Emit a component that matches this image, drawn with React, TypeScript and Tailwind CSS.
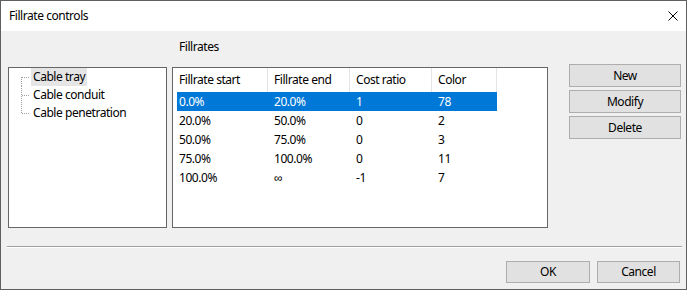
// Rows of the fillrate table
const rows = [
  { start: '0.0%', end: '20.0%', cost: '1', color: '78' },
  { start: '20.0%', end: '50.0%', cost: '0', color: '2' },
  { start: '50.0%', end: '75.0%', cost: '0', color: '3' },
  { start: '75.0%', end: '100.0%', cost: '0', color: '11' },
  { start: '100.0%', end: '∞', cost: '-1', color: '7' },
];

const treeItems = ['Cable tray', 'Cable conduit', 'Cable penetration'];

function TreeConnector({ first, last }: { first: boolean; last: boolean }) {
  return (
    <svg width="22" height="18" className="shrink-0" shapeRendering="crispEdges">
      <line
        x1="12.5"
        y1={first ? 9 : 0}
        x2="12.5"
        y2={last ? 10 : 18}
        stroke="#a0a0a0"
        strokeDasharray="1 1"
      />
      <line x1="13" y1="9.5" x2="21" y2="9.5" stroke="#a0a0a0" strokeDasharray="1 1" />
    </svg>
  );
}

function WinButton({ label, className }: { label: string; className: string }) {
  return (
    <button
      className={`flex items-center justify-center border border-[#adadad] bg-[#e1e1e1] text-black ${className}`}
    >
      {label}
    </button>
  );
}

export default function App() {
  return (
    <div
      className="w-[687px] h-[290px] border border-[#5f5f5f] bg-[#f0f0f0] flex flex-col text-[12px] leading-[16px] tracking-[-0.45px] text-black"
      style={{ fontFamily: '"Noto Sans", "Liberation Sans", sans-serif' }}
    >
      {/* Title bar */}
      <div className="h-[30px] bg-white flex items-center justify-between pl-[8px] pr-[8px] shrink-0">
        <span>Fillrate controls</span>
        <svg width="10" height="10" viewBox="0 0 10 10" className="shrink-0">
          <path d="M0.5 0.5 L9.5 9.5 M9.5 0.5 L0.5 9.5" stroke="#000" strokeWidth="1" />
        </svg>
      </div>

      {/* Main content */}
      <div className="flex items-start pl-[7px]">
        {/* Tree */}
        <div className="mt-[36px] w-[159px] h-[161px] border border-[#666666] bg-white">
          {treeItems.map((item, i) => (
            <div key={item} className="flex items-center h-[18px]">
              <TreeConnector first={i === 0} last={i === treeItems.length - 1} />
              <span className={`h-[18px] flex items-center px-[2px] ${i === 0 ? 'bg-[#e5e5e5]' : ''}`}>
                {item}
              </span>
            </div>
          ))}
        </div>

        {/* Fillrates table */}
        <div className="ml-[5px] flex flex-col">
          <div className="mt-[8px] h-[16px] pl-[7px]">Fillrates</div>
          <div className="mt-[12px] w-[376px] h-[161px] border border-[#666666] bg-white">
            <div className="flex h-[24px]">
              <div className="w-[95px] border-r border-[#e5e5e5] pl-[6px] flex items-center">Fillrate start</div>
              <div className="w-[82px] border-r border-[#e5e5e5] pl-[6px] flex items-center">Fillrate end</div>
              <div className="w-[82px] border-r border-[#e5e5e5] pl-[6px] flex items-center">Cost ratio</div>
              <div className="w-[65px] border-r border-[#e5e5e5] pl-[6px] flex items-center">Color</div>
            </div>
            {rows.map((r, i) => (
              <div
                key={r.start}
                className={`flex h-[19px] ml-[4px] w-[320px] items-center ${i === 0 ? 'bg-[#0078d7] text-white' : ''}`}
              >
                <div className="w-[91px] pl-[2px]">{r.start}</div>
                <div className="w-[82px] pl-[6px]">{r.end}</div>
                <div className="w-[82px] pl-[6px]">{r.cost}</div>
                <div className="w-[65px] pl-[6px]">{r.color}</div>
              </div>
            ))}
          </div>
        </div>

        {/* Side buttons */}
        <div className="ml-[21px] mt-[33px] flex flex-col gap-[3px]">
          <WinButton label="New" className="w-[112px] h-[23px]" />
          <WinButton label="Modify" className="w-[112px] h-[23px]" />
          <WinButton label="Delete" className="w-[112px] h-[23px]" />
        </div>
      </div>

      {/* Separator */}
      <div className="ml-[6px] mt-[18px] w-[675px] border-t border-[#a0a0a0] border-b border-b-white" />

      {/* Dialog buttons */}
      <div className="flex justify-end gap-[7px] mt-[13px] pr-[6px]">
        <WinButton label="OK" className="w-[84px] h-[22px]" />
        <WinButton label="Cancel" className="w-[83px] h-[22px]" />
      </div>
    </div>
  );
}
